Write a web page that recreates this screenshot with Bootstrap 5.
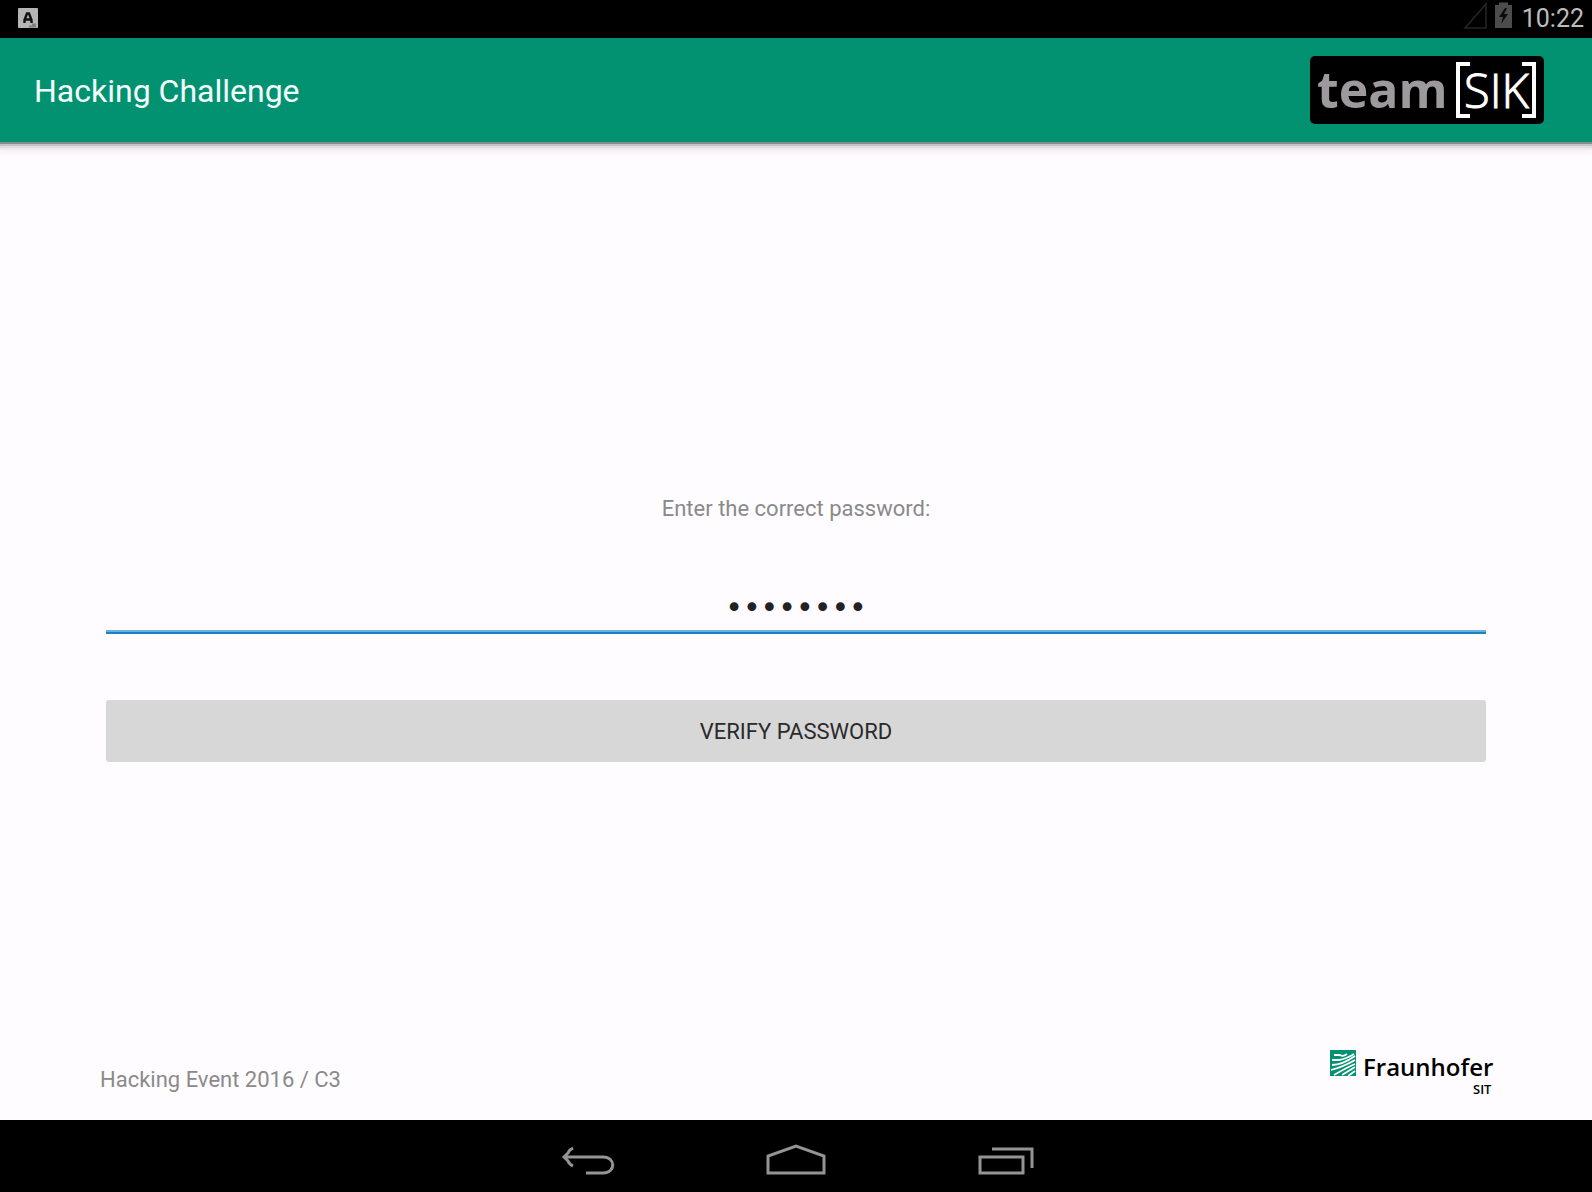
<!DOCTYPE html>
<html lang="en">
<head>
<meta charset="utf-8">
<meta name="viewport" content="width=device-width, initial-scale=1">
<title>Hacking Challenge</title>
<link href="https://cdn.jsdelivr.net/npm/bootstrap@5.3.0/dist/css/bootstrap.min.css" rel="stylesheet">
<style>
  body { font-family: Roboto, "Noto Sans", sans-serif; background: #fffcff; color: #8a8a8a; font-size: 22px; line-height: 30px; }
  .status-strip { height: 38px; padding: 0 8px 0 18px; }
  .status-strip time { color: #bcbcbc; font-size: 25px; line-height: 38px; margin-left: 9px; }
  .app-bar { height: 104px; background: #029272; padding: 0 48px 0 34px; position: relative;
    box-shadow: 0 2px 0 #8c8c8c, 0 4px 0 #c4c4c4, 0 6px 0 #dfdddf, 0 8px 0 #efebef, 0 12px 3px #f8f3f8; }
  .app-title { color: #f4fffc; font-size: 32px; line-height: 40px; font-weight: 400; padding-top: 2px; }
  .page-body { padding: 84px 106px 0; }
  .page-body label { margin-bottom: 66px; }
  .secret-field { font-family: "DejaVu Sans", sans-serif; font-size: 30px; line-height: 36px; height: 44px; color: #222; border: 0; border-bottom: 2px solid #1a80c4; border-radius: 0; background: none; padding: 0 0 8px; box-shadow: inset 0 -2px 0 #6cb0da; }
  .secret-field:focus { background: none; color: #222; border-color: #1a80c4; box-shadow: inset 0 -2px 0 #6cb0da; }
  .verify-btn { height: 62px; margin-top: 66px; background: #d7d7d7; color: #2a2a2a; font-size: 22px; line-height: 30px; border: 0; border-radius: 3px; padding: 2px 0 0; }
  .verify-btn:hover { background: #c9c9c9; color: #2a2a2a; }
  .page-foot { padding: 20px 98px 10px 100px; }
  .system-nav { height: 72px; gap: 144px; padding-top: 8px; }
  .system-nav button { width: 64px; height: 48px; padding: 0; line-height: 0; }
</style>
<script src="https://cdn.jsdelivr.net/npm/bootstrap@5.3.0/dist/js/bootstrap.bundle.min.js"></script>
</head>
<body class="d-flex flex-column min-vh-100">

<div class="status-strip bg-black d-flex align-items-center justify-content-between">
  <svg width="20" height="22" viewBox="0 0 20 22" role="img" aria-label="Keyboard">
    <rect width="20" height="20" rx="1" fill="#b5b5b5"/>
    <path d="M6.500 15V12L9 5.500H11L13.500 12V15M7 11.500H13" fill="none" stroke="#111" stroke-width="2.400"/>
    <path d="M11 18.500H18M14 16.500H18" stroke="#7e827e" stroke-width="2"/>
  </svg>
  <div class="d-flex align-items-start">
    <svg width="50" height="30" viewBox="0 0 50 30" role="img" aria-label="No signal, battery charging">
      <path d="M2 28L23 4V28Z" fill="none" stroke="#242424" stroke-width="1.600"/>
      <path d="M32 5H36V2.500H45V5H49V28H32Z" fill="#4b4d4b"/>
      <path d="M42 8L36 17H40L38 24L45 14H41L44 8Z" fill="#0c0c0c"/>
    </svg>
    <time>10:22</time>
  </div>
</div>

<header class="app-bar d-flex align-items-center justify-content-between">
  <h1 class="app-title m-0">Hacking Challenge</h1>
  <svg width="234" height="68" viewBox="0 0 234 68" role="img" aria-label="team SIK">
    <rect width="234" height="68" rx="5" fill="#000"/>
    <text x="7" y="52" font-family="Open Sans" font-weight="700" font-size="50" fill="#9d999d">team</text>
    <path d="M160 8H148V60H160M212 8H224V60H212" fill="none" stroke="#fff" stroke-width="4"/>
    <text x="154" y="52" font-family="Open Sans" font-weight="300" font-size="47" fill="#fff" stroke="#fff">SIK</text>
  </svg>
</header>

<main class="page-body flex-grow-1 d-flex flex-column justify-content-center">
  <form class="d-flex flex-column" onsubmit="return false">
    <label for="secret" class="text-center">Enter the correct password:</label>
    <input type="password" id="secret" class="secret-field form-control text-center" value="password">
    <button type="submit" class="verify-btn btn w-100">VERIFY PASSWORD</button>
  </form>
</main>

<footer class="page-foot d-flex justify-content-between align-items-center">
  <span>Hacking Event 2016 / C3</span>
  <svg width="164" height="60" viewBox="0 0 164 60" role="img" aria-label="Fraunhofer SIT">
    <rect width="26" height="26" fill="#029272"/>
    <path d="M4 5H10Q13 7 17 4M2 10H9Q16 9 24 4M2 15Q12 15 25 6M1 20Q13 17 25 10M4 25Q16 18 25 14M12 25L25 17M18 26L25 21" fill="none" stroke="#fffcff" stroke-width="1.800"/>
    <text x="33" y="26" font-family="Open Sans" font-weight="600" font-size="24" fill="#000">Fraunhofer</text>
    <text x="143" y="44" font-family="Open Sans" font-weight="600" font-size="13" fill="#000">SIT</text>
  </svg>
</footer>

<nav class="system-nav bg-black d-flex justify-content-center align-items-center" aria-label="System">
  <button type="button" class="btn border-0" aria-label="Back">
    <svg width="64" height="48" viewBox="0 0 64 48" fill="none" stroke="#949494" stroke-width="3"><path d="M8 21H47C60 21 60 37 47 37H30M17 12Q13 14 12 17L8 21L12 25Q13 28 17 30"/></svg>
  </button>
  <button type="button" class="btn border-0" aria-label="Home">
    <svg width="64" height="48" viewBox="0 0 64 48" fill="none" stroke="#949494" stroke-width="3"><path d="M4 37V20L32 10L60 20V37Z"/></svg>
  </button>
  <button type="button" class="btn border-0" aria-label="Recent apps">
    <svg width="64" height="48" viewBox="0 0 64 48" fill="none" stroke="#949494" stroke-width="3"><path d="M8 21H51V37H8ZM20 13H60V32"/></svg>
  </button>
</nav>
</body>
</html>
